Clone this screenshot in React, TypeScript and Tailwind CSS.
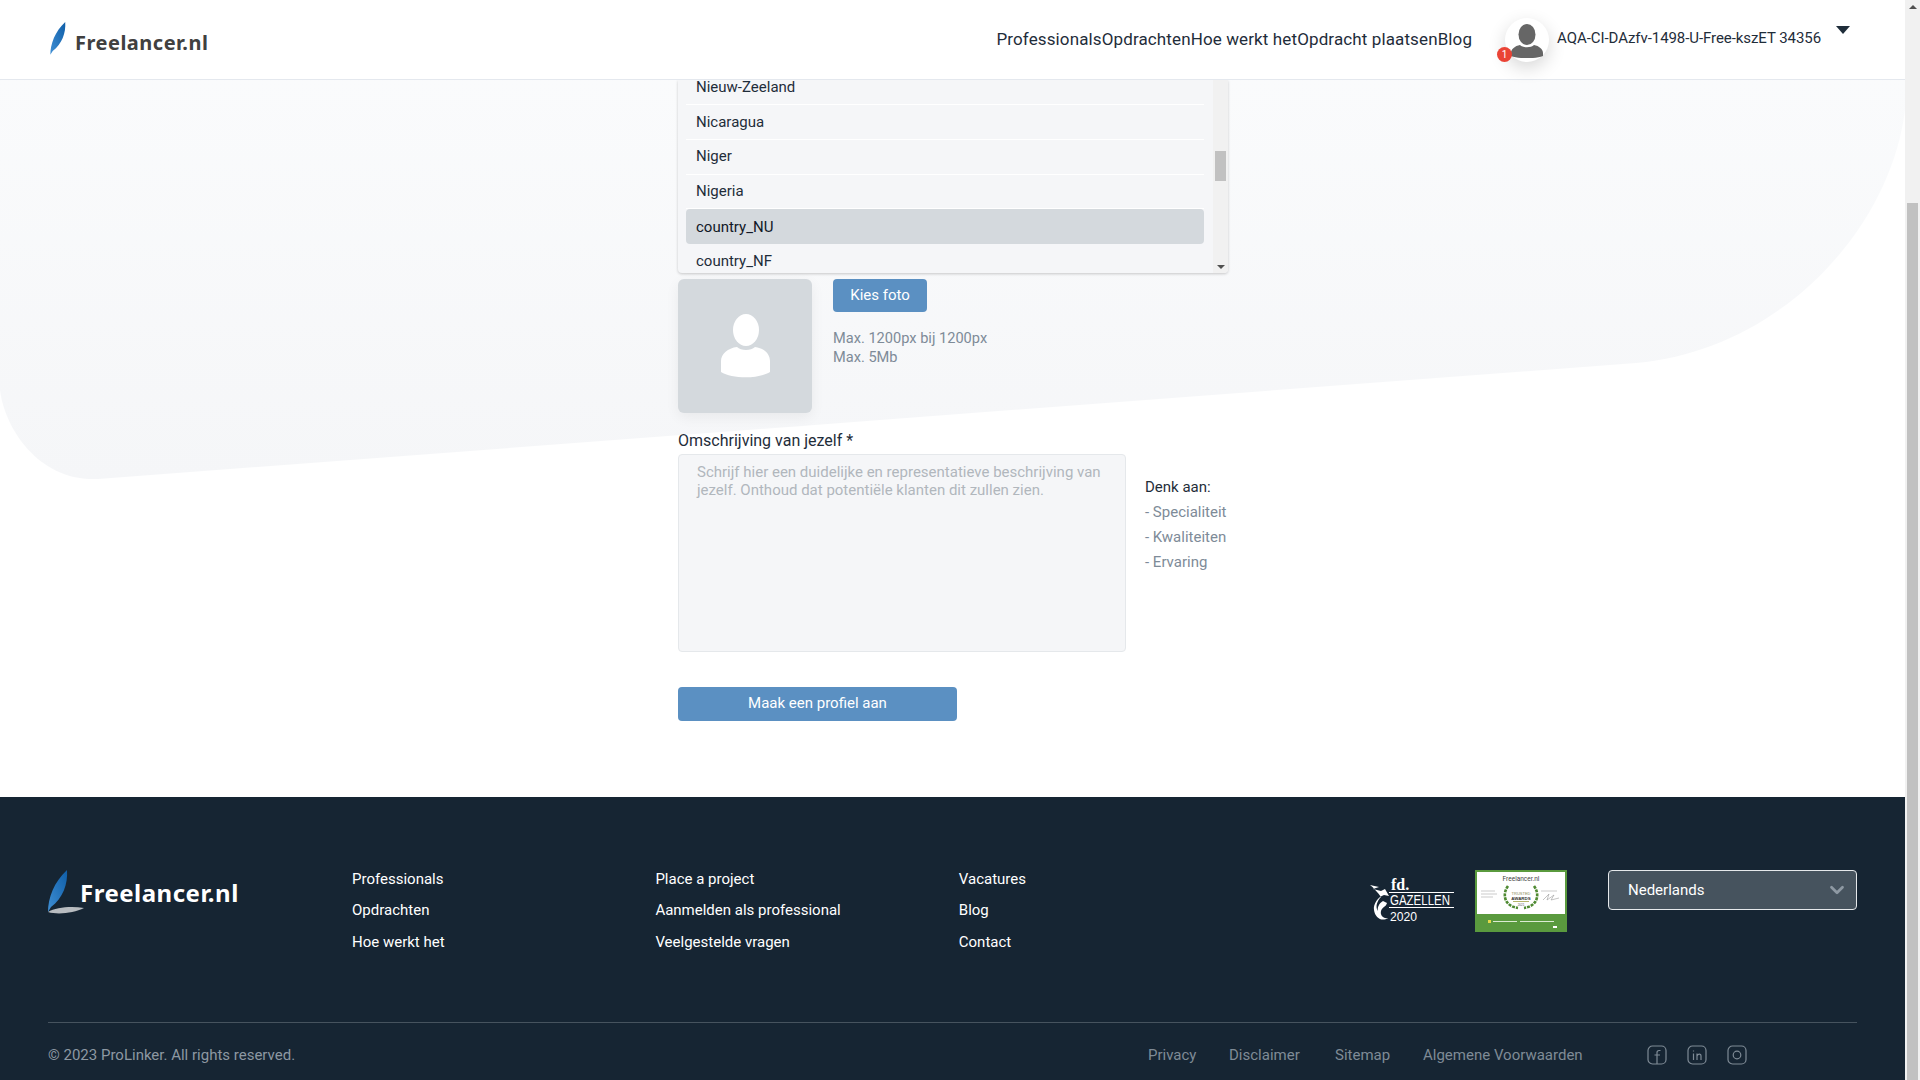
import { ChevronDown } from "lucide-react";

const navItems = ["Professionals", "Opdrachten", "Hoe werkt het", "Opdracht plaatsen", "Blog"];
const countries = ["Nieuw-Zeeland", "Nicaragua", "Niger", "Nigeria", "country_NU", "country_NF"];
const footerCols = [
  ["Professionals", "Opdrachten", "Hoe werkt het"],
  ["Place a project", "Aanmelden als professional", "Veelgestelde vragen"],
  ["Vacatures", "Blog", "Contact"],
];
const legalLinks = [
  { label: "Privacy", width: "w-[81px]" },
  { label: "Disclaimer", width: "w-[106px]" },
  { label: "Sitemap", width: "w-[88px]" },
  { label: "Algemene Voorwaarden", width: "w-[224px]" },
];

function Feather({ withLeaf, className }: { withLeaf?: boolean; className: string }) {
  return (
    <svg viewBox="0 0 40 46" className={className}>
      <defs>
        <linearGradient id="feather" x1="0" y1="1" x2="1" y2="0">
          <stop offset="0" stopColor="#3f8fd4" />
          <stop offset="1" stopColor="#0f5ea8" />
        </linearGradient>
      </defs>
      <path d="M0 42 C0 28 6 12 19 0 C20 14 15 28 3 37 Z" fill="url(#feather)" />
      {withLeaf && <path d="M0 42 C8 37 24 36 36 38 C26 43 10 45 0 42 Z" fill="#b8bcc0" />}
    </svg>
  );
}

function AvatarIcon() {
  return (
    <svg viewBox="0 0 32 34" className="h-[34px] w-[32px]" fill="#666666">
      <ellipse cx="16" cy="10.5" rx="8.5" ry="10.5" />
      <path d="M9 21 C12 24 20 24 23 21 C28 22 32 25 32 29 L32 32 C24 35 8 35 0 32 L0 29 C0 25 4 22 9 21 Z" />
    </svg>
  );
}

function PhotoIcon() {
  return (
    <svg viewBox="0 0 49 64" className="h-[64px] w-[49px]" fill="#ffffff">
      <ellipse cx="25" cy="16" rx="13" ry="16" />
      <path d="M16 33 C20 37 30 37 34 33 C43 34 49 40 49 47 L49 58 C38 65 11 65 0 58 L0 47 C0 40 7 34 16 33 Z" />
    </svg>
  );
}

function Header() {
  return (
    <header className="relative z-10 flex h-20 items-center border-b border-[#e4e8ee] bg-white pl-[50px]">
      <Feather className="h-[36px] w-[32px]" />
      <span className="-ml-[7px] mt-[6px] font-['Noto_Sans',sans-serif] text-[20px] font-bold tracking-[0.5px] text-[#404040]">
        Freelancer.nl
      </span>
      <nav className="ml-auto flex text-[17px] tracking-[0.12px] text-[#1f2d3a]">
        {navItems.map((item) => (
          <a key={item}>{item}</a>
        ))}
      </nav>
      <div className="relative ml-[33px] flex h-[44px] w-[44px] items-center justify-center rounded-full bg-white shadow-[0_6px_18px_rgba(0,0,0,0.16)]">
        <div className="mt-[3px] flex">
          <AvatarIcon />
        </div>
        <span className="absolute -left-2 bottom-0 flex h-[15px] w-[15px] items-center justify-center rounded-full bg-[#ea4335] text-[10px] text-white">
          1
        </span>
      </div>
      <span className="mb-[2px] ml-2 text-[15px] tracking-[-0.07px] text-[#1f2d3a]">AQA-CI-DAzfv-1498-U-Free-kszET 34356</span>
      <div className="mb-[20px] ml-[15px] mr-[55px] h-0 w-0 border-x-[7px] border-t-[8px] border-x-transparent border-t-[#1f2d3a]" />
    </header>
  );
}

function CountryList() {
  return (
    <div className="flex h-[193px] w-[550px] overflow-hidden rounded-b bg-[#f5f6f8] shadow-[0_1px_3px_rgba(0,0,0,0.2)]">
      <ul className="-mt-[9.8px] flex-1 pl-2 pr-[9px]">
        {countries.map((c) => (
          <li
            key={c}
            className={
              c === "country_NU"
                ? "flex h-[34.8px] items-center rounded bg-[#d4d9dd] pl-[10px] text-[15px] text-[#111827]"
                : "flex h-[34.8px] items-center border-b border-white pl-[10px] text-[15px] text-[#1f2d3a]"
            }
          >
            {c}
          </li>
        ))}
      </ul>
      <div className="flex w-[15px] flex-col items-center bg-[#f1f1f1]">
        <div className="mt-[71px] h-[30px] w-[11px] bg-[#c1c1c1]" />
        <div className="mt-auto mb-[4px] h-0 w-0 border-x-4 border-t-4 border-x-transparent border-t-[#505050]" />
      </div>
    </div>
  );
}

function PhotoRow() {
  return (
    <div className="mt-[6px] flex">
      <div className="flex h-[134px] w-[134px] items-center justify-center rounded-md bg-[#d4d9dd] shadow-[0_4px_14px_rgba(0,0,0,0.06)]">
        <PhotoIcon />
      </div>
      <div className="ml-[21px]">
        <button className="h-[33px] w-[94px] rounded-sm bg-[#5b90c2] pb-[1px] text-[15px] text-white">Kies foto</button>
        <p className="mt-[17px] text-[14.6px] leading-[19px] text-[#7e8b98]">
          Max. 1200px bij 1200px
          <br />
          Max. 5Mb
        </p>
      </div>
    </div>
  );
}

function DescriptionField() {
  return (
    <div className="mt-[18px]">
      <label className="block text-[16px] leading-[20px] text-[#1f2d3a]">Omschrijving van jezelf *</label>
      <div className="mt-[3px] flex">
        <textarea
          readOnly
          className="h-[198px] w-[448px] resize-none rounded border border-[#e5e8eb] bg-[#f5f6f8] px-[18px] py-[8px] text-[15px] leading-[18px] outline-none placeholder:text-[#b1b7bd]"
          placeholder="Schrijf hier een duidelijke en representatieve beschrijving van jezelf. Onthoud dat potentiële klanten dit zullen zien."
        />
        <div className="ml-[19px] pt-[23px] text-[15px]">
          <p className="leading-[20px] text-[#1f2d3a]">Denk aan:</p>
          <ul className="text-[#7e8b98]">
            <li className="mt-[5px] leading-[20px]">- Specialiteit</li>
            <li className="mt-[5px] leading-[20px]">- Kwaliteiten</li>
            <li className="mt-[5px] leading-[20px]">- Ervaring</li>
          </ul>
        </div>
      </div>
      <button className="mt-[35px] h-[34px] w-[279px] rounded-sm bg-[#5b90c2] pb-[2px] text-[15px] text-white">
        Maak een profiel aan
      </button>
    </div>
  );
}

function Gazellen() {
  return (
    <svg viewBox="0 0 86 47" className="h-[47px] w-[86px]" fill="#ffffff">
      <path d="M0 8 L9 10 L3 12 L11 14 L15 12 L19 19 L14 18 C8 20 3 27 4 33 C5 41 12 45 18 41 C13 42 10 38 11 34 C12 30 16 30 17 26 L13 24 C9 26 7 31 8 34 C5 30 7 24 11 20 C8 16 4 11 0 8 Z" />
      <text x="21" y="13" fontFamily="Liberation Serif, serif" fontSize="16" fontWeight="700">
        fd.
      </text>
      <rect x="19" y="15" width="65" height="1" />
      <text x="20" y="28" fontFamily="Liberation Sans, sans-serif" fontSize="15" textLength="60" lengthAdjust="spacingAndGlyphs">
        GAZELLEN
      </text>
      <rect x="19" y="30" width="65" height="1" />
      <text x="20" y="44" fontFamily="Liberation Sans, sans-serif" fontSize="13" textLength="27" lengthAdjust="spacingAndGlyphs">
        2020
      </text>
    </svg>
  );
}

function AwardBadge() {
  return (
    <svg viewBox="0 0 92 62" className="ml-[19px] h-[62px] w-[92px]">
      <rect width="92" height="62" fill="#5a9a3e" />
      <rect x="2" y="2" width="88" height="42" fill="#ffffff" />
      <text x="46" y="11" textAnchor="middle" fontFamily="Roboto, sans-serif" fontSize="6.5" fill="#444444">
        Freelancer.nl
      </text>
      <g stroke="#b5b5b5" strokeWidth="0.7">
        <path d="M6 21 H20 M6 24 H22 M6 27 H18" />
        <path d="M66 21 H82" />
      </g>
      <path d="M68 30 L74 24 L72 30 L79 25 L76 30 L84 28" stroke="#9a9a9a" strokeWidth="0.6" fill="none" />
      <path d="M33 16 C27 24 29 36 43 38" stroke="#4f8a32" strokeWidth="2.6" strokeDasharray="3 1" fill="none" />
      <path d="M59 16 C65 24 63 36 49 38" stroke="#4f8a32" strokeWidth="2.6" strokeDasharray="3 1" fill="none" />
      <text x="46" y="25" textAnchor="middle" fontFamily="Liberation Sans, sans-serif" fontSize="4" fill="#8a8a5a">
        TRUSTED
      </text>
      <text x="46" y="29.5" textAnchor="middle" fontFamily="Liberation Sans, sans-serif" fontSize="4.4" fontWeight="700" fill="#333333">
        AWARDS
      </text>
      <rect x="38" y="31" width="16" height="1" fill="#b5b56a" />
      <text x="46" y="36" textAnchor="middle" fontFamily="Liberation Sans, sans-serif" fontSize="3" fill="#555555">
        2021
      </text>
      <rect x="13" y="50" width="3" height="3" fill="#e5d94a" />
      <rect x="18" y="51" width="24" height="1" fill="#dcebd3" />
      <rect x="45" y="51" width="34" height="1" fill="#dcebd3" />
      <rect x="78" y="56" width="4" height="2" fill="#ffffff" />
    </svg>
  );
}

function SocialIcon({ kind }: { kind: "f" | "in" | "ig" }) {
  return (
    <svg viewBox="0 0 20 20" className="h-[20px] w-[20px]" fill="none" stroke="#7f8b96" strokeWidth="1.2">
      <rect x="1" y="1" width="18" height="18" rx="4.5" />
      {kind === "f" && <path d="M13.5 5.5 H12 C10.6 5.5 10 6.4 10 7.6 V19 M7.5 10 H13" />}
      {kind === "in" && <path d="M6.5 8.5 V15 M6.5 5.5 V6.6 M10 15 V8.5 M10 11 C10.5 9 14 8.2 14 11 V15" />}
      {kind === "ig" && <circle cx="10" cy="10" r="3.8" />}
    </svg>
  );
}

function Footer() {
  return (
    <footer className="h-[283px] bg-[#162533] px-[48px] pt-[73px]">
      <div className="flex h-[153px] items-start border-b border-[#46535e]">
        <div className="flex w-[304px] items-center">
          <Feather withLeaf className="h-[46px] w-[40px]" />
          <span className="-ml-[8px] font-['Noto_Sans',sans-serif] text-[24px] font-bold leading-[46px] tracking-[0.5px] text-white">
            Freelancer.nl
          </span>
        </div>
        {footerCols.map((col) => (
          <ul key={col[0]} className="-mt-[1px] w-[303.4px] text-[15px] text-white">
            {col.map((link) => (
              <li key={link} className="h-[31.4px] leading-[20px]">
                {link}
              </li>
            ))}
          </ul>
        ))}
        <div className="ml-auto flex items-start">
          <div className="mt-[7px] flex">
            <Gazellen />
          </div>
          <AwardBadge />
          <div className="ml-[41px] flex h-[40px] w-[249px] items-center justify-between rounded border border-[#e5e8eb] bg-[#46535e] pl-[19px] pr-[8px] text-[15px] text-white">
            Nederlands
            <ChevronDown strokeWidth={3} className="h-[22px] w-[22px] text-[#8e99a3]" />
          </div>
        </div>
      </div>
      <div className="flex items-center pt-[21px] text-[15px] text-[#7f8b96]">
        <span className="text-[#8d98a2]">© 2023 ProLinker. All rights reserved.</span>
        <div className="ml-auto flex">
          {legalLinks.map((l) => (
            <a key={l.label} className={l.width}>
              {l.label}
            </a>
          ))}
        </div>
        <div className="mr-[110px] flex gap-[20px]">
          <SocialIcon kind="f" />
          <SocialIcon kind="in" />
          <SocialIcon kind="ig" />
        </div>
      </div>
    </footer>
  );
}

export default function App() {
  return (
    <div className="flex h-screen overflow-hidden bg-white font-['Roboto',sans-serif]">
      <div className="relative flex-1">
        {/* achtergrondvorm achter het formulier */}
        <svg viewBox="0 0 1905 500" className="absolute left-0 top-0 h-[500px] w-[1905px]">
          <defs>
            <linearGradient id="blob" x1="0" y1="0" x2="0" y2="1">
              <stop offset="0" stopColor="#fbfcfd" />
              <stop offset="1" stopColor="#f5f6f8" />
            </linearGradient>
          </defs>
          <path d="M0 0 H1905 V110 C1890 230 1780 350 1636 363 L98 479 C40 482 5 430 0 390 Z" fill="url(#blob)" />
        </svg>
        <div className="relative flex h-full flex-col">
          <Header />
          <main className="h-[717px] pl-[678px]">
            <CountryList />
            <PhotoRow />
            <DescriptionField />
          </main>
          <Footer />
        </div>
      </div>
      {/* scrollbalk van de pagina */}
      <div className="flex w-[15px] flex-col items-center bg-[#f1f1f1]">
        <div className="mt-[5px] h-0 w-0 border-x-4 border-b-4 border-x-transparent border-b-[#505050]" />
        <div className="mt-[194px] w-[11px] flex-1 bg-[#c1c1c1]" />
      </div>
    </div>
  );
}
